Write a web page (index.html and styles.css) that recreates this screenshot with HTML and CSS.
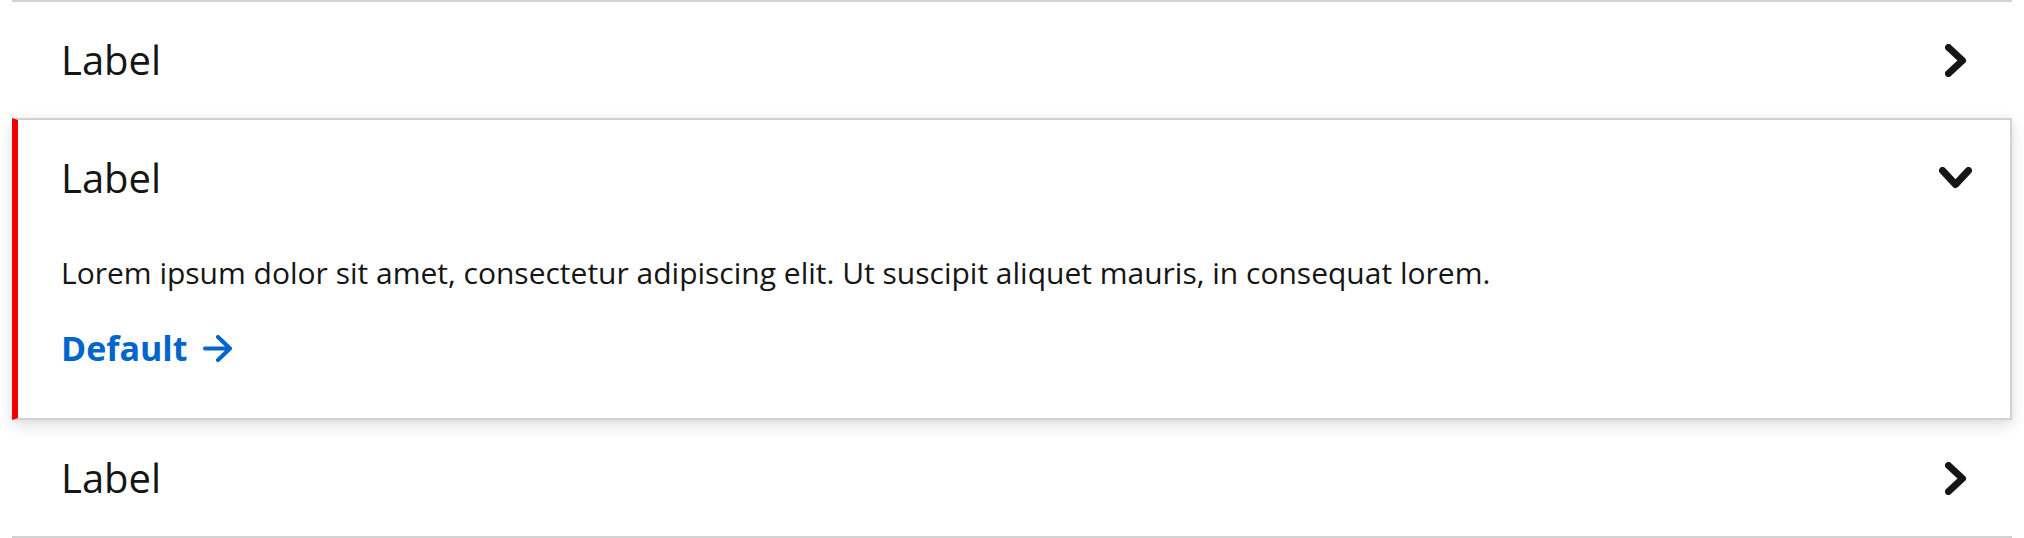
FILE: index.html
```html
<!DOCTYPE html>
<html lang="en">
<head>
<meta charset="utf-8">
<title>Accordion</title>
<link rel="stylesheet" href="styles.css">
</head>
<body>
<div class="accordion">
  <div class="item item-first">
    <div class="header">
      <span class="label">Label</span>
      <svg class="chev" width="22" height="33" viewBox="0 0 22 33"><polyline points="3.5,3.5 17.5,16.5 3.5,29.5"/></svg>
    </div>
  </div>
  <div class="item item-open">
    <div class="header">
      <span class="label">Label</span>
      <svg class="chev" width="33" height="22" viewBox="0 0 33 22"><polyline points="3.5,3.5 16.5,17.5 29.5,3.5"/></svg>
    </div>
    <div class="body">
      <p class="text">Lorem ipsum dolor sit amet, consectetur adipiscing elit. Ut suscipit aliquet mauris, in consequat lorem.</p>
      <a class="link" href="#">Default <svg class="arrow" width="30" height="27" viewBox="0 0 30 27"><path d="M2 13.5H27M15 2L27 13.5L15 25"/></svg></a>
    </div>
  </div>
  <div class="item item-last">
    <div class="header">
      <span class="label">Label</span>
      <svg class="chev" width="22" height="33" viewBox="0 0 22 33"><polyline points="3.5,3.5 17.5,16.5 3.5,29.5"/></svg>
    </div>
  </div>
</div>
</body>
</html>
```

FILE: styles.css
```css
html, body {
  margin: 0;
  padding: 0;
  background: #ffffff;
}
body {
  font-family: "Open Sans", "Liberation Sans", sans-serif;
  color: #151515;
}
.accordion {
  padding: 0 12px;
}
.item-first {
  border-top: 2px solid #d2d2d2;
}
.item-last {
  border-bottom: 2px solid #d2d2d2;
}
.item-open {
  border: 2px solid #d2d2d2;
  border-left: 6px solid #ee0000;
  box-shadow: 0 5px 14px rgba(0, 0, 0, 0.13), 0 0 6px rgba(0, 0, 0, 0.04);
  position: relative;
}
.header {
  height: 116px;
  display: flex;
  align-items: center;
  justify-content: space-between;
  padding: 0 40px 0 49px;
}
.item-open .header {
  padding: 0 38px 0 43px;
}
.label {
  font-size: 40px;
  line-height: 48px;
  font-weight: 400;
}
.chev {
  display: block;
}
.chev polyline {
  fill: none;
  stroke: #151515;
  stroke-width: 7;
  stroke-linecap: round;
  stroke-linejoin: round;
}
.item-first .chev, .item-last .chev {
  padding: 0 5px 0 6px;
  box-sizing: border-box;
  width: 33px;
}
.body {
  padding: 15px 38px 49px 43px;
}
.text {
  margin: 0;
  font-size: 30px;
  line-height: 43px;
}
.link {
  display: flex;
  width: max-content;
  align-items: center;
  gap: 16px;
  margin-top: 33px;
  color: #0066cc;
  text-decoration: none;
  font-weight: 700;
  font-size: 34px;
  line-height: 42px;
}
.arrow {
  display: block;
}
.arrow path {
  fill: none;
  stroke: #0066cc;
  stroke-width: 4;
  stroke-linecap: round;
  stroke-linejoin: round;
}
```
